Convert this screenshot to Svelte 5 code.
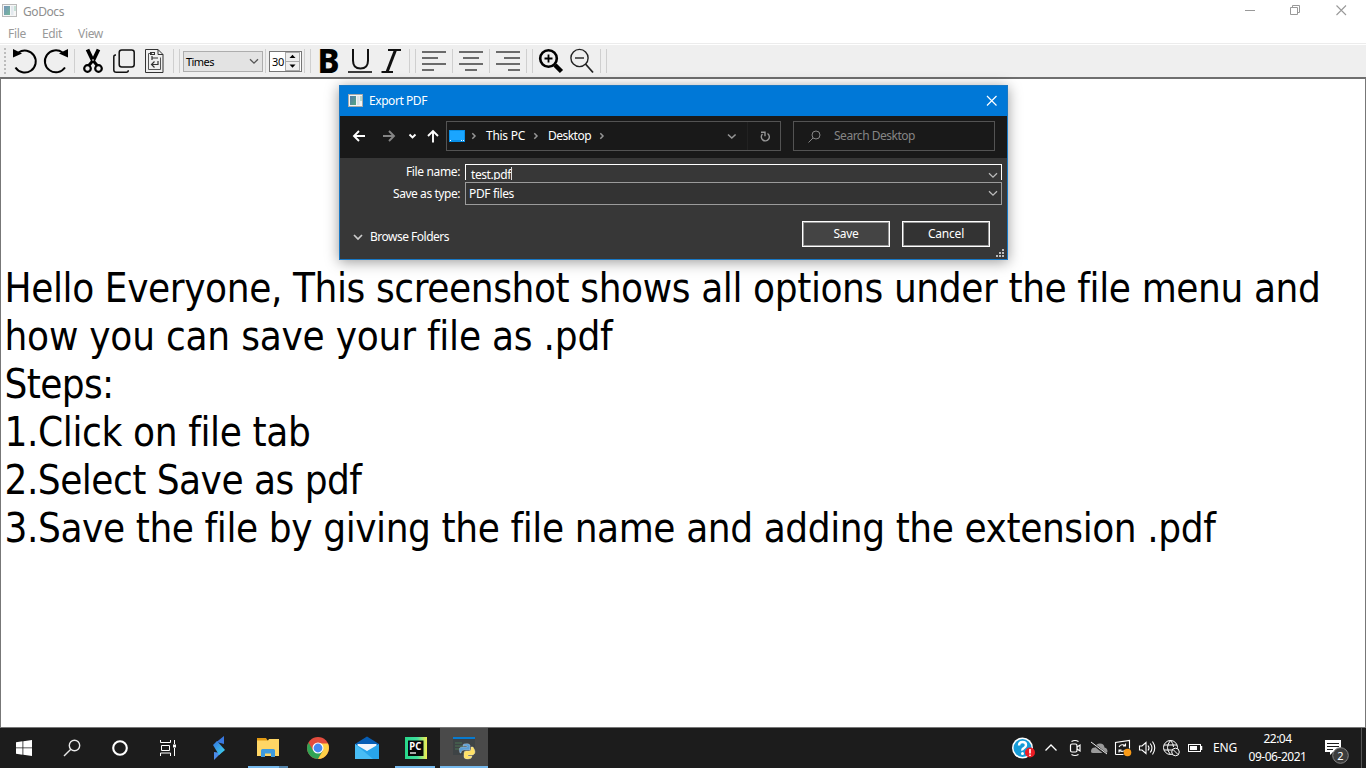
<script>
  const documentLines = [
    { text: 'Hello Everyone, This screenshot shows all options under the file menu and', width: 1316 },
    { text: 'how you can save your file as .pdf', width: 608 },
    { text: 'Steps:', width: 109 },
    { text: '1.Click on file tab', width: 306 },
    { text: '2.Select Save as pdf', width: 357 },
    { text: '3.Save the file by giving the file name and adding the extension .pdf', width: 1211 }
  ];

  // Tracks a label out or in so that it fills the given advance width.
  function fit(node, width) {
    const natural = node.getBoundingClientRect().width;
    const count = node.textContent.length;
    node.style.letterSpacing = `${(width - natural) / count}px`;
  }
</script>

{#snippet appIcon()}
  <svg class="app-icon" width="16" height="14" viewBox="0 0 16 14">
    <defs>
      <linearGradient id="pane" x1="0" y1="0" x2="1" y2="1">
        <stop offset="0" stop-color="#5279ab" /><stop offset="1" stop-color="#55a782" />
      </linearGradient>
    </defs>
    <rect x="0.5" y="0.5" width="14" height="12" fill="#f4f4f4" stroke="#aaa" />
    <rect x="2" y="2" width="6" height="9" fill="url(#pane)" />
    <rect x="9" y="2" width="2.5" height="9" fill="#dce3ea" />
    <rect x="12" y="2" width="2" height="5" fill="#b9d9cc" />
  </svg>
{/snippet}

{#snippet chevron(color)}
  <svg width="10" height="7" viewBox="0 0 10 7"><path d="M1 1.2 5 5.2 9 1.2" fill="none" stroke={color} stroke-width="1.3" /></svg>
{/snippet}

{#snippet crumb()}
  <svg width="6" height="8" viewBox="0 0 6 8"><path d="M1.3 1.3 4 4 1.3 6.700" fill="none" stroke="#969696" stroke-width="1.5" /></svg>
{/snippet}

<div class="screen">
  <header class="titlebar">
    {@render appIcon()}
    <span class="title" use:fit={41}>GoDocs</span>
    <svg class="controls" width="122" height="22" viewBox="0 0 122 22" fill="none" stroke="#999">
      <path d="M1 10.5h10" />
      <path d="M46.5 7.5h7v7h-7zM48.500 7.500v-2h7v7h-2" />
      <path d="m92.500 5.500 9.500 9.500m0-9.500-9.500 9.500" stroke-width="1.1" />
    </svg>
  </header>
  <nav class="menubar">
    <span use:fit={18}>File</span><span use:fit={20}>Edit</span><span use:fit={25}>View</span>
  </nav>

  <div class="toolbar">
    <svg width="10" height="32" viewBox="0 0 10 32" fill="#bcbcbc">
      {#each [3, 7, 11, 15, 19, 23, 27] as y}<rect x="4" {y} width="2" height="2" />{/each}
    </svg>
    <svg width="31" height="32" viewBox="0 0 31 32" fill="none" stroke="#000" stroke-width="2">
      <path d="M8.500 7.500A11 11 0 1 1 5.500 22.500" /><path d="M3 4 12 8.500 3 12.500z" fill="#000" stroke="none" />
    </svg>
    <svg width="31" height="32" viewBox="0 0 31 32" fill="none" stroke="#000" stroke-width="2">
      <path d="M21.500 7.500A11 11 0 1 0 24 22.500" /><path d="M27 4 18 8.500 27 12.500z" fill="#000" stroke="none" />
    </svg>
    <i class="sep"></i>
    <svg width="31" height="32" viewBox="0 0 31 32" fill="none" stroke="#000" stroke-width="2.2">
      <circle cx="9.500" cy="23.500" r="3.300" /><circle cx="20.500" cy="23.500" r="3.300" />
      <path d="M10.800 20.500 15 15.500 19.200 20.500" stroke-width="3" />
      <path d="M9.500 4.500 15.500 17M20.500 4.500 14.500 17" stroke-width="3.800" />
      <path d="M15 14v2" stroke="#efefef" stroke-width="1" />
    </svg>
    <svg width="31" height="32" viewBox="0 0 31 32" fill="none" stroke="#111" stroke-width="1.500">
      <rect x="10.200" y="5" width="15" height="17" rx="2.500" /><path d="M7 10H6.500Q4.800 10 4.800 12v13q0 2.300 2.500 2.300h10q2 0 2-2" />
    </svg>
    <svg width="31" height="32" viewBox="0 0 31 32" fill="none" stroke="#333">
      <path d="M5.500 4.500H18l5 5v18H5.500zM18 4.500v5h5" /><path d="M12 8.500H8.500v16h12v-12" stroke="#555" />
      <path d="M12 13h6M12 11v4M18 16v3.500h-6m2.500-3-3 3 3 3" stroke-width="1.200" /><rect x="10.500" y="7.500" width="4" height="2" />
    </svg>
    <i class="sep"></i><i class="sep"></i>
    <div class="combo"><span use:fit={28}>Times</span>{@render chevron('#555')}</div>
    <i class="sep"></i>
    <div class="spin">
      <span use:fit={12}>30</span>
      <div class="steps">
        <svg width="13" height="8" viewBox="0 0 13 8"><path d="M3.500 5h6l-3-3.200z" /></svg>
        <svg width="13" height="8" viewBox="0 0 13 8"><path d="M3.500 2.500h6l-3 3.200z" /></svg>
      </div>
    </div>
    <i class="sep"></i><i class="sep"></i>
    <b class="bold">B</b>
    <svg width="31" height="32" viewBox="0 0 31 32" fill="none" stroke="#111">
      <path d="M8 4v11.500q0 8 7.500 8t7.500-8V4" stroke-width="2" /><path d="M3 27h24" stroke-width="1.600" />
    </svg>
    <svg width="31" height="32" viewBox="0 0 31 32" fill="none" stroke="#111">
      <path d="M12 5h13M5.500 27H17" stroke-width="2" /><path d="M19.500 5 11 27" stroke-width="3" />
    </svg>
    <i class="sep"></i><i class="sep"></i>
    <svg width="31" height="32" viewBox="0 0 31 32" stroke="#404040" stroke-width="1.700"><path d="M3 7h24M3 13h16M3 19h24M3 25h12" /></svg>
    <i class="sep"></i>
    <svg width="31" height="32" viewBox="0 0 31 32" stroke="#404040" stroke-width="1.700"><path d="M3 7h24M7 13h16M3 19h24M9 25h12" /></svg>
    <i class="sep"></i>
    <svg width="31" height="32" viewBox="0 0 31 32" stroke="#404040" stroke-width="1.700"><path d="M3 7h24M11 13h16M3 19h24M15 25h12" /></svg>
    <i class="sep"></i><i class="sep"></i>
    <svg width="31" height="32" viewBox="0 0 31 32" fill="none" stroke="#000">
      <circle cx="12.500" cy="13.500" r="8.300" stroke-width="2.600" /><path d="M8.500 13.500h8m-4-4v8" stroke-width="1.800" /><path d="m19 20 6.500 6.500" stroke-width="4.500" />
    </svg>
    <svg width="31" height="32" viewBox="0 0 31 32" fill="none" stroke="#222" stroke-width="1.400">
      <circle cx="12.500" cy="13" r="8.600" /><path d="m18.500 19 7.500 8.500" stroke-width="1.800" /><path d="M8 13h9" />
    </svg>
    <i class="sep"></i><i class="sep"></i>
  </div>

  <main class="editor">
    {#each documentLines as line}
      <p><span use:fit={line.width}>{line.text}</span></p>
    {/each}
  </main>

  <footer class="taskbar">
    <div class="task narrow">
      <svg width="16" height="16" viewBox="0 0 16 16" fill="#fff"><path d="M0 2.200 6.500 1.300v6.200H0zM7.300 1.200 16 0v7.500H7.300zM0 8.300h6.500v6.400L0 13.800zM7.300 8.300H16V16l-8.700-1.200z" /></svg>
    </div>
    <div class="task narrow">
      <svg width="18" height="18" viewBox="0 0 18 18" fill="none" stroke="#e8e8e8" stroke-width="1.400"><circle cx="11.500" cy="6.500" r="5.200" /><path d="m7.800 10.300-6.800 6.800" /></svg>
    </div>
    <div class="task narrow">
      <svg width="18" height="18" viewBox="0 0 18 18" fill="none" stroke="#fff" stroke-width="2.100"><circle cx="9" cy="9" r="6.800" /></svg>
    </div>
    <div class="task narrow last">
      <svg width="17" height="16" viewBox="0 0 17 16" fill="none" stroke="#fff"><path d="M.5 0v2.500h10V0M.5 16v-3h10v3M1.500 5.500h8v5h-8zM14.500 0v4m0 4v8" /><path d="M13 4.500h3v3h-3z" fill="#fff" stroke="none" /></svg>
    </div>
    <div class="task bolt">
      <svg width="14" height="26" viewBox="0 0 14 26">
        <defs><linearGradient id="bolt" x1="0" y1="0" x2="1" y2="1"><stop stop-color="#3572df" /><stop offset="1" stop-color="#3ed8ed" /></linearGradient></defs>
        <path d="M12 1v8L4.500 7z" fill="#3978df" /><path d="M2 25v-8l7 1z" fill="#4c8be8" /><path d="m1 10 4-4 8 9-6 5z" fill="url(#bolt)" />
      </svg>
    </div>
    <div class="task files">
      <svg width="24" height="22" viewBox="0 0 24 22">
        <path d="M1 1h9l2 3H1z" fill="#e29a13" /><path d="M1 3.500h11l1-1.500h10v17H1z" fill="#ffd665" />
        <path d="M5 20v-6.500q0-1.500 1.500-1.500h11q1.500 0 1.500 1.500V20h-4v-3.500H9V20z" fill="#3d9ade" />
      </svg>
    </div>
    <div class="task">
      <svg width="24" height="24" viewBox="0 0 24 24">
        <circle cx="12" cy="12" r="11" fill="#e34c3e" />
        <path d="M2.500 6.500A11 11 0 0 0 12 23l4.800-8.200L12 12l-4.800 2.800z" fill="#30a454" />
        <path d="M12 23a11 11 0 0 0 10-15.500H12L16.800 15z" fill="#ffd047" />
        <circle cx="12" cy="12" r="5.500" fill="#fff" /><circle cx="12" cy="12" r="4.400" fill="#4688f1" />
      </svg>
    </div>
    <div class="task">
      <svg width="26" height="24" viewBox="0 0 26 24">
        <path d="M1 8 13 .500 25 8v4H1z" fill="#075eb5" /><path d="M3.500 8h19v8h-19z" fill="#f2f6fb" />
        <path d="M1 8 13 15 25 8v15H1z" fill="#28a4ea" /><path d="m1 8 18 15H1z" fill="#48bdf5" />
      </svg>
    </div>
    <div class="task running">
      <svg width="22" height="22" viewBox="0 0 22 22">
        <defs><linearGradient id="pycharm"><stop stop-color="#27d88a" /><stop offset=".55" stop-color="#42dfa0" /><stop offset="1" stop-color="#f4ee50" /></linearGradient></defs>
        <path d="M0 0h22v22H0z" fill="url(#pycharm)" /><path d="M3 3.500h15.500V19H3z" fill="#080808" />
        <text x="4.300" y="12.500" textLength="12" lengthAdjust="spacingAndGlyphs" fill="#fff" font-family="Noto Sans" font-size="10" font-weight="700">PC</text><path d="M5 16h6" stroke="#fff" stroke-width="1.300" />
      </svg>
    </div>
    <div class="task active">
      <svg width="24" height="24" viewBox="0 0 24 24">
        <path d="M1 2h22v17H1z" fill="#3e4345" /><path d="M1 1h22v2H1z" fill="#087bd0" /><path d="M3 7h7m-7 3h9m-9 3h5" stroke="#4b7554" />
        <path d="M12 8q5-1 6 1v5h-6q-3 0-3 3H8q-2-6 2-6h5v-1h-4q0-2 1-2" fill="#5a9dd2" stroke="#c7d2d8" stroke-width=".4" />
        <path d="M19 11h2q4 6 0 8h-5v1h4q0 3-4 3-4 0-4-2v-4q0-2 2-2h3q2 0 2-2z" fill="#ffe166" stroke="#e9e6ce" stroke-width=".4" />
      </svg>
    </div>

    <div class="tray">
      <svg width="31" height="28" viewBox="0 0 31 28">
        <circle cx="14.500" cy="14" r="10.500" fill="#fff" /><circle cx="14.500" cy="14" r="9" fill="#159bd7" />
        <path d="M11 11.500q0-3.500 3.500-3.500t3.500 3q0 2-2 3t-1.500 2.500" fill="none" stroke="#fff" stroke-width="2.400" /><circle cx="14.500" cy="19.500" r="1.500" fill="#fff" />
        <circle cx="22" cy="18.500" r="5" fill="#ed1c24" /><path d="M22 15v4.500m0 1v1.500" stroke="#fff" stroke-width="1.600" />
      </svg>
      <svg width="24" height="24" viewBox="0 0 24 24" fill="none" stroke="#fff" stroke-width="1.300"><path d="m6.500 14.500 5.500-5.500 5.500 5.500" /></svg>
      <svg width="24" height="24" viewBox="0 0 24 24" fill="none" stroke="#fff" stroke-width="1.200"><rect x="7.500" y="8" width="6.500" height="8" rx="1.500" /><path d="m14 11 3-2v6l-3-2M8.500 5.500q3.500-2 7 0m-7 13q3.500 2 7 0" /></svg>
      <svg width="24" height="24" viewBox="0 0 24 24"><path d="M4 15.500q0-4 4-4 1-4 5-4 4 0 4.500 4 3 .500 3 4 0 1.500-2 1.500H6q-2 0-2-1.500" fill="#9a9a9a" /><path d="m4.500 6.500 15 12" stroke="#1c1c1c" stroke-width="2.500" /><path d="m4 6 16 12" stroke="#eee" /></svg>
      <svg width="24" height="24" viewBox="0 0 24 24" fill="none" stroke="#fff" stroke-width="1.100"><path d="M4.500 18.500v-12l14-2v8M4.500 18.500h8" /><path d="M8 11a4 4 0 0 1 6.500-1M14.500 7.500V10H12m2 4a4 4 0 0 1-6 0m0 2.500V14h2.500" /><circle cx="16.500" cy="16.500" r="3.800" fill="#f99b18" stroke="none" /></svg>
      <svg width="24" height="24" viewBox="0 0 24 24" fill="none" stroke="#fff" stroke-width="1.100"><path d="M4.500 10h2.500l4-3.500v11L7 14H4.500zM13 9.500q2 2.500 0 5m2.200-7q3.500 4.500 0 9m2.300-11q4.500 6.500 0 13" /></svg>
      <svg width="24" height="24" viewBox="0 0 24 24" fill="none" stroke="#fff"><circle cx="11.500" cy="11.500" r="7" /><path d="M5 9h13M5 14h8m-1.500-9.500q-6 7 0 14m0-14q3 3 3 6.500" /><circle cx="16.500" cy="16" r="3.800" fill="#1c1c1c" /><path d="m14 13.500 5 5" /></svg>
      <svg width="24" height="24" viewBox="0 0 24 24" fill="none" stroke="#fff"><rect x="5.500" y="8.500" width="12" height="7" /><path d="M7 10h7v4H7z" fill="#fff" stroke="none" /><path d="M18.500 10v4" stroke-width="1.500" /></svg>
      <span class="lang"><span use:fit={24}>ENG</span></span>
      <div class="clock"><span use:fit={28}>22:04</span><span use:fit={58}>09-06-2021</span></div>
      <svg class="notice" width="43" height="40" viewBox="0 0 43 40">
        <path d="M13 12h16v12h-8l-3 3v-3h-5z" fill="#fff" /><path d="M15 15.500h12M15 18.500h12M15 21.500h6" stroke="#1c1c1c" />
        <circle cx="28.500" cy="27.500" r="7.800" fill="#3c3c3c" stroke="#858585" /><text x="28.500" y="31.500" text-anchor="middle" fill="#fff" font-family="Noto Sans" font-size="11">2</text>
      </svg>
    </div>
  </footer>

  <section class="dialog">
    <header class="dialog-title">
      {@render appIcon()}
      <span use:fit={58}>Export PDF</span>
      <svg class="close" width="12" height="12" viewBox="0 0 12 12"><path d="m1 1 9.500 9.500m0-9.500L1 10.500" stroke="#fff" stroke-width="1.200" /></svg>
    </header>
    <div class="navrow">
      <svg width="106" height="30" viewBox="0 0 106 30" fill="none" stroke="#fff" stroke-width="1.900">
        <path d="M25 15H14m5-5-5 5 5 5" /><path d="M43 15h11m-5-5 5 5-5 5" stroke="#858585" /><path d="m69.500 13.500 3 3 3-3" /><path d="M93 21.500V10m-5 5 5-5 5 5" />
      </svg>
      <div class="address">
        <svg class="desk" width="16" height="12" viewBox="0 0 16 12"><path d="M0 0h16v12H0z" fill="#078fe7" /><path d="M1 1h14v9H1z" fill="#1aa5ff" /><path d="M1 10.500h1m10 0h1m1 0h1" stroke="#fff" /></svg>
        <span class="arrow">{@render crumb()}</span>
        <span class="pc"><span use:fit={39}>This PC</span></span>
        <span class="arrow2">{@render crumb()}</span>
        <span class="desktop"><span use:fit={43}>Desktop</span></span>
        {@render crumb()}
        <div class="address-end">
          <svg width="48" height="28" viewBox="0 0 48 28" fill="none" stroke="#969696" stroke-width="1.600"><path d="m1 12.500 3.800 3.500L8.600 12.500" /><path d="M20.500 0v28" stroke="#222" stroke-width="1" /><path d="M40.500 11.500a4 4 0 1 1-5 .500M34 10.300h4v4" stroke-width="1.400" /></svg>
        </div>
      </div>
      <div class="search">
        <svg width="13" height="13" viewBox="0 0 13 13" fill="none" stroke="#858585"><circle cx="8" cy="5" r="4" /><path d="m5 8-4.500 4.500" /></svg>
        <span use:fit={81}>Search Desktop</span>
      </div>
    </div>
    <div class="fields">
      <div class="field name"><label for="file-name"><span use:fit={54}>File name:</span></label><div class="box" id="file-name"><span use:fit={40}>test.pdf</span><i class="caret"></i><span class="open">{@render chevron('#bbb')}</span></div></div>
      <div class="field type"><label for="file-type"><span use:fit={67}>Save as type:</span></label><div class="box" id="file-type"><span use:fit={45}>PDF files</span><span class="open">{@render chevron('#bbb')}</span></div></div>
    </div>
    <div class="actions">
      <div class="browse"><svg width="10" height="7" viewBox="0 0 10 7"><path d="m1 1 4 4 4-4" fill="none" stroke="#ccc" stroke-width="1.700" /></svg><span use:fit={79}>Browse Folders</span></div>
      <button class="save"><span use:fit={25}>Save</span></button>
      <button><span use:fit={36}>Cancel</span></button>
    </div>
    <svg class="grip" width="8" height="8" viewBox="0 0 8 8" fill="#bbb"><path d="M6 0h2v2H6zM6 3h2v2H6zM3 3h2v2H3zM0 6h2v2H0zM3 6h2v2H3zM6 6h2v2H6z" /></svg>
  </section>
</div>

<style>
  :global(body) { overflow: hidden; }
  * { box-sizing: border-box; }
  svg { display: block; flex: none; }
  span { white-space: nowrap; }
  .screen { position: relative; display: flex; flex-direction: column; width: 1366px; height: 768px; background: #fff; font: 12px/16px "Noto Sans", sans-serif; color: #000; }
  .titlebar { display: flex; height: 23px; padding: 4px 0 0 2px; color: #8e8e8e; flex: none; }
  .titlebar .app-icon { opacity: .8; }
  .title { margin-left: 5px; }
  .controls { margin: -4px 0 0 auto; }
  .menubar { display: flex; height: 21px; padding: 3px 0 0 8px; gap: 16px; color: #999; border-bottom: 1px solid #ececec; margin-bottom: 1px; flex: none; }
  .toolbar { display: flex; height: 32px; background: #efefef; flex: none; }
  .sep { width: 6px; padding-left: 2px; height: 26px; margin-top: 4px; flex: none; }
  .sep::before { content: ""; display: block; width: 1px; height: 24px; background: #cfcfcf; }
  .combo { width: 80px; height: 21px; margin-top: 6px; border: 1px solid #adadad; background: #e3e3e3; display: flex; align-items: center; justify-content: space-between; padding: 0 3px 0 2px; font-size: 11px; }
  .spin { width: 33px; height: 21px; margin-top: 6px; border: 1px solid #777; background: #fff; display: flex; align-items: center; padding-left: 2px; font-size: 11px; }
  .steps { margin: 0 1px 0 auto; display: flex; flex-direction: column; gap: 1px; background: #aaa; border: 1px solid #aaa; }
  .steps svg { background: #eee; }
  .bold { width: 31px; padding-right: 2px; text-align: center; font: 800 33px/31px "Noto Sans", sans-serif; }
  .editor { flex: 1; border: 1px solid #777; border-top: 2px solid #777; border-top-color: #6f6f6f; padding: 185px 4px 0; font: 40px/48px "DejaVu Sans Condensed", "DejaVu Sans", sans-serif; font-stretch: condensed; }
  p { margin: 0 0 0 -.5px; height: 48px; }
  .taskbar { display: flex; height: 40px; background: #1c1c1c; flex: none; color: #fff; }
  .task { position: relative; width: 49px; display: flex; align-items: center; justify-content: center; }
  .narrow { width: 48px; }
  .last { width: 51px; padding-right: 3px; }
  .bolt { padding-right: 2px; }
  .files { padding-right: 1px; }
  .files::after, .running::after, .active::after { content: ""; position: absolute; left: 4px; right: 5px; bottom: 0; height: 2px; background: #76b9ed; }
  .files::after { background: linear-gradient(90deg, #76b9ed 31px, #5485ac 31px); }
  .active { width: 48px; background: #4a4a4a; }
  .active::after { left: 0; right: 0; }
  .tray { margin-left: auto; width: 358px; display: flex; align-items: center; }
  .lang { width: 35px; padding-left: 6px; }
  .clock { width: 70px; padding-left: 1px; display: flex; flex-direction: column; align-items: center; line-height: 18px; }
  .tray::after { content: ""; width: 1px; height: 40px; margin-left: 6px; background: #555; }
  .dialog { position: absolute; left: 339px; top: 85px; width: 669px; height: 175px; border: 1px solid #1878c5; background: #373737; color: #fff; display: flex; flex-direction: column; box-shadow: 0 2px 13px #0006; }
  .dialog-title { height: 30px; background: #0078d7; display: flex; align-items: center; padding: 0 9px 0 8px; gap: 5px; flex: none; }
  .close { margin-left: auto; }
  .navrow { height: 42px; background: #191919; display: flex; padding-top: 5px; flex: none; }
  .address { width: 335px; height: 30px; border: 1px solid #535353; display: flex; align-items: center; }
  .desk { margin-left: 2px; }
  .arrow { width: 21px; padding-left: 6px; }
  .pc { width: 47px; }
  .arrow2 { width: 15px; }
  .desktop { width: 51px; }
  .address-end { margin-left: auto; width: 53px; }
  .search { width: 202px; height: 30px; margin-left: 12px; border: 1px solid #535353; display: flex; align-items: center; padding-left: 14px; gap: 13px; color: #858585; }
  .fields { display: flex; flex-direction: column; padding: 6px 0 0; gap: 2px; flex: none; }
  .field { display: flex; }
  .field label { width: 120px; text-align: right; margin-right: 5px; }
  .box { width: 537px; display: flex; align-items: center; border: 1px solid #9b9b9b; padding-left: 3px; background: #333; }
  .name .box { height: 16px; border-color: #fff; border-bottom: 0; padding: 2px 0 0 5px; background: #373737; overflow: hidden; align-items: flex-start; }
  .type .box { height: 23px; }
  .type label { padding-top: 4px; }
  .caret { width: 1px; height: 13px; background: #ddd; }
  .open { margin: 0 3px 0 auto; }
  .name .open { padding-top: 5px; }
  .actions { display: flex; padding: 16px 17px 0 13px; gap: 12px; }
  .browse { display: flex; align-items: center; gap: 7px; margin-right: auto; padding-top: 6px; }
  button { width: 88px; height: 26px; padding: 0; border: 1px solid #fff; outline: 1px solid #999; outline-offset: -2px; color: #fff; background: #333; font: inherit; }
  .save { background: #444; }
  .grip { position: absolute; right: 3px; bottom: 2px; }
</style>
